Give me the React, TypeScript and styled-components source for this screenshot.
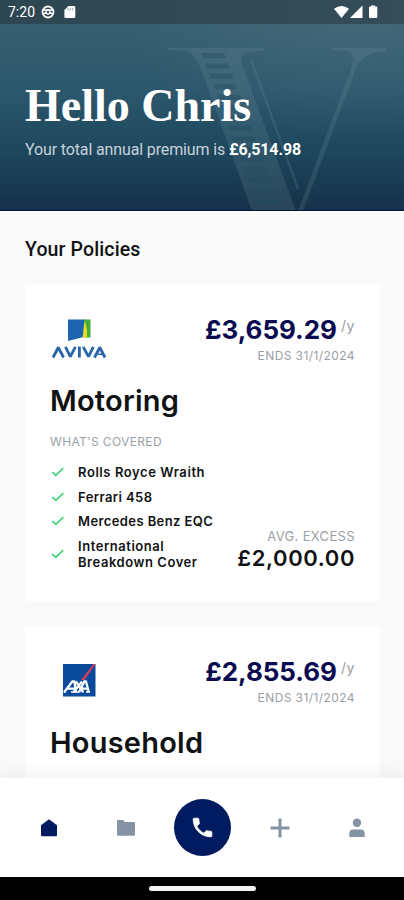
import React from "react";
import styled, { createGlobalStyle } from "styled-components";

const GlobalStyle = createGlobalStyle`
  * { box-sizing: border-box; }
  body { margin: 0; background: #fafafa; }
`;

const Screen = styled.div`
  position: relative;
  display: flex;
  flex-direction: column;
  width: 404px;
  height: 900px;
  overflow: hidden;
  background: #fafafa;
  font-family: Inter, "Work Sans", sans-serif;
  color: #111214;
`;

const Header = styled.header`
  position: relative;
  flex: none;
  height: 211px;
  overflow: hidden;
  border-bottom: 1px solid #06123c;
  background: radial-gradient(ellipse 240px 130px at 360px 10px, rgba(255, 255, 255, 0.065), transparent),
    linear-gradient(180deg, #38606f 0%, #365e70 14%, #2d586d 42%, #1e475d 71%, #15324a 100%);
`;

const Monogram = styled.svg`
  position: absolute;
  left: 160px;
  top: 40px;
  width: 240px;
  height: 171px;
`;

const StatusBar = styled.div`
  position: relative;
  display: flex;
  align-items: center;
  justify-content: space-between;
  height: 24px;
  padding: 0 26px 0 8px;
  background: linear-gradient(90deg, #2d4652, #354d58);
  color: #fff;
`;

const StatusGroup = styled.div<{ $gap: number }>`
  display: flex;
  align-items: center;
  gap: ${(p) => p.$gap}px;
`;

const Clock = styled.span`
  width: 27px;
  font: 400 14px/24px Roboto, sans-serif;
  white-space: nowrap;
`;

const Greeting = styled.h1`
  position: relative;
  margin: 58px 0 0 25px;
  font: 700 46px/48px "Liberation Serif", serif;
  color: #fff;
  white-space: nowrap;
`;

const Summary = styled.p`
  position: relative;
  margin: 9px 0 0 25px;
  font: 400 16px/22px Roboto, sans-serif;
  letter-spacing: -0.13px;
  color: #c6d2da;
  white-space: nowrap;
  strong { color: #fff; font-weight: 700; }
`;

const Content = styled.main`
  flex: 1;
  min-height: 0;
  overflow: hidden;
  padding: 27px 24px 0 25px;
`;

const SectionTitle = styled.h2`
  margin: 0 0 22px;
  font: 500 19.5px/24px Roboto, sans-serif;
  letter-spacing: 0.12px;
`;

const Card = styled.article`
  height: 317px;
  margin-bottom: 25px;
  padding: 32px 25px 0 25px;
  background: #fff;
`;

const CardTop = styled.div`
  display: flex;
  justify-content: space-between;
  height: 64px;
`;

const Brand = styled.div`
  display: flex;
  justify-content: center;
  width: 58px;
  padding-top: 1px;
`;

const PriceBlock = styled.div`
  display: flex;
  flex-direction: column;
  align-items: flex-end;
`;

const PriceRow = styled.div`
  display: flex;
  align-items: flex-start;
  gap: 4px;
  height: 27px;
`;

const Price = styled.span`
  font-size: 26px;
  line-height: 27px;
  font-weight: 700;
  color: #0a0a50;
  letter-spacing: -0.05px;
`;

const PerYear = styled.span`
  font: 400 14px/20px Inter, sans-serif;
  letter-spacing: 0.6px;
  color: #9a9da3;
`;

const Caption = styled.span<{ $size: number; $spacing: number }>`
  font-size: ${(p) => p.$size}px;
  line-height: 18px;
  letter-spacing: ${(p) => p.$spacing}px;
  color: #9a9fa6;
  white-space: nowrap;
`;

const Ends = styled(Caption)`
  margin-top: 4px;
`;

const PolicyName = styled.h3`
  margin: 3px 0 0;
  font-size: 29px;
  line-height: 36px;
  font-weight: 600;
  letter-spacing: 0.22px;
`;

const Covered = styled.div`
  margin-top: 14px;
  height: 18px;
  display: flex;
`;

const CardBottom = styled.div`
  display: flex;
  justify-content: space-between;
  align-items: flex-end;
  margin-top: 9px;
`;

const CoverList = styled.ul`
  display: flex;
  flex-direction: column;
  gap: 8.6px;
  margin: 4px 0 0;
  padding: 0;
  list-style: none;
`;

const CoverItem = styled.li<{ $spacing: number }>`
  display: flex;
  align-items: center;
  gap: 12px;
  font-size: 13px;
  line-height: 16px;
  font-weight: 600;
  letter-spacing: ${(p) => p.$spacing}px;
  white-space: pre;
`;

const Excess = styled.div`
  display: flex;
  flex-direction: column;
  align-items: flex-end;
  margin-bottom: -1.5px;
`;

const ExcessAmount = styled.span`
  font-size: 22px;
  line-height: 26px;
  font-weight: 600;
  letter-spacing: 0.6px;
`;

const Nav = styled.nav`
  position: relative;
  flex: none;
  display: grid;
  grid-template-columns: repeat(5, 1fr);
  place-items: center;
  height: 99px;
  padding: 0 9px 0 11px;
  background: #fff;
  box-shadow: 0 0 20px 4px rgba(20, 30, 50, 0.06);
`;

const NavButton = styled.button<{ $active?: boolean }>`
  display: flex;
  align-items: center;
  justify-content: center;
  width: 20px;
  height: 20px;
  padding: 0;
  border: 0;
  background: none;
  color: ${(p) => (p.$active ? "#001b60" : "#8593a5")};
`;

const CallButton = styled(NavButton)`
  width: 57px;
  height: 57px;
  border-radius: 50%;
  background: #001b60;
  color: #fff;
`;

const GestureBar = styled.div`
  position: relative;
  flex: none;
  display: flex;
  justify-content: center;
  height: 23px;
  padding: 9px 0 0 1px;
  background: #000;
`;

const Handle = styled.div`
  width: 107px;
  height: 5px;
  border-radius: 3px;
  background: #f4f2f4;
`;

const SHADES = Array.from({ length: 15 }, (_, i) => 53 + i * 10.4);

const HeaderMonogram = () => (
  <Monogram viewBox="160 40 240 171">
    <g fill="#7697a6" fillOpacity="0.2">
      <path d="M168 48H264V51L247 52Q240 53 242 64L296 211H252L202 72Q195 53 187 51L168 50Z" />
      <path d="M250 60L252 59L299 188L297 190Z" />
      <path d="M332 48H386V51Q364 52 357 66L303 211H298L351 69Q356 53 348 51L332 50Z" />
    </g>
    <g fill="#214c62" fillOpacity="0.42">
      {SHADES.map((y) => {
        const x = 201 + (y - 53) * 0.37;
        return <path key={y} d={`M${x} ${y}h23l2 5h-23z`} />;
      })}
    </g>
  </Monogram>
);

const AvivaLogo = () => (
  <svg width="58" height="46" viewBox="50 317 58 46">
    <path d="M83.5 319.5H90.5V337.5H83.5Z" fill="#42ad38" />
    <path d="M84.7 320L87 330V337.5H82.5Z" fill="#f0dc24" />
    <path d="M68 319.5H84.5L82.7 337.3L68 341Z" fill="#1c63b0" />
    <g stroke="#2865ad" strokeWidth="2.8" fill="none" strokeLinejoin="bevel">
      <path d="M53 357.5L58.3 347.5L63.6 357.5" />
      <path d="M65.4 346.8L70.3 356.6L75.4 346.8" />
      <path d="M79.4 346.5V357.5" />
      <path d="M83.2 346.8L88.5 356.6L93.4 346.8" />
      <path d="M94.5 357.5L99.8 347.5L105 357.5" />
    </g>
    <path d="M97.5 353.5H103V355H97.5Z" fill="#2865ad" />
  </svg>
);

const AxaLogo = () => (
  <svg width="58" height="46" viewBox="50 659 58 46">
    <path d="M63 664H95.5V696.5H63Z" fill="#094a9b" />
    <path d="M93.5 664H95.5L84.2 680H81.2Z" fill="#ed3857" />
    <g fill="none" stroke="#fff" strokeWidth="2.3" strokeLinejoin="round">
      <path d="M64 692.5L72.3 681.5H74.5L76 692.5M67.5 688.7H75" />
      <path d="M76 681.5L83.2 692.3M82 681.5L73.5 692.3" />
      <path d="M79 692.3L84.3 681.5H86L88.8 692.3M81.5 688.7H88" />
    </g>
    <path d="M71 692H79M86 692H90" stroke="#fff" strokeWidth="1.4" />
  </svg>
);

const Check = () => (
  <svg width="16" height="12" viewBox="0 0 16 12" fill="none">
    <path d="M2.3 6L5.8 9.3L13.3 2.2" stroke="#3bd375" strokeWidth="1.6" />
  </svg>
);

interface Policy {
  name: string;
  price: string;
  logo: React.ReactNode;
  covers: { text: string; spacing: number }[];
  excess?: string;
}

const POLICIES: Policy[] = [
  {
    name: "Motoring",
    price: "£3,659.29",
    logo: <AvivaLogo />,
    covers: [
      { text: "Rolls Royce Wraith", spacing: 0.58 },
      { text: "Ferrari 458", spacing: 0.42 },
      { text: "Mercedes Benz EQC", spacing: 0.4 },
      { text: "International\nBreakdown Cover", spacing: 0.55 },
    ],
    excess: "£2,000.00",
  },
  { name: "Household", price: "£2,855.69", logo: <AxaLogo />, covers: [] },
];

const PolicyCard = ({ policy }: { policy: Policy }) => (
  <Card>
    <CardTop>
      <Brand>{policy.logo}</Brand>
      <PriceBlock>
        <PriceRow>
          <Price>{policy.price}</Price>
          <PerYear>/y</PerYear>
        </PriceRow>
        <Ends $size={12} $spacing={0.42}>ENDS 31/1/2024</Ends>
      </PriceBlock>
    </CardTop>
    <PolicyName>{policy.name}</PolicyName>
    {policy.excess && (
      <>
        <Covered>
          <Caption $size={12} $spacing={0.35}>WHAT'S COVERED</Caption>
        </Covered>
        <CardBottom>
          <CoverList>
            {policy.covers.map((c) => (
              <CoverItem key={c.text} $spacing={c.spacing}>
                <Check />
                {c.text}
              </CoverItem>
            ))}
          </CoverList>
          <Excess>
            <Caption $size={13} $spacing={0.35}>AVG. EXCESS</Caption>
            <ExcessAmount>{policy.excess}</ExcessAmount>
          </Excess>
        </CardBottom>
      </>
    )}
  </Card>
);

const App = () => (
  <Screen>
    <GlobalStyle />
    <Header>
      <HeaderMonogram />
      <StatusBar>
        <StatusGroup $gap={6}>
          <Clock>7:20</Clock>
          <svg width="14" height="14" viewBox="0 0 14 14" fill="none" stroke="#fff">
            <circle cx="7" cy="7" r="5.5" strokeWidth="1.8" />
            <circle cx="7" cy="7" r="2" strokeWidth="1.4" />
            <path d="M2 5H12M2.4 8.7L5 8M11.6 8.7L9 8" strokeWidth="1.5" />
          </svg>
          <svg width="16" height="14" viewBox="0 0 16 14">
            <path d="M7.5 1H13Q14.3 1 14.3 2.2V11.8Q14.3 13 13 13H4.7Q3.4 13 3.4 11.8V5Z" fill="#fff" />
            <path d="M7 3V5.5M9.2 3V5.5M11.4 3V5.5" stroke="#6f808a" strokeWidth="0.7" />
          </svg>
        </StatusGroup>
        <StatusGroup $gap={0}>
          <svg width="44" height="14" viewBox="0 0 44 14" fill="#fff">
            <path d="M0 3.8Q7.5 -2 15 3.8L7.5 13Z" />
            <path d="M28.5 .5V13H16Z" />
            <path d="M37 1.5V.4H41V1.5H42.3Q43.3 1.5 43.3 2.5V12Q43.3 13 42.3 13H36Q35 13 35 12V2.5Q35 1.5 36 1.5Z" />
          </svg>
        </StatusGroup>
      </StatusBar>
      <Greeting>Hello Chris</Greeting>
      <Summary>
        Your total annual premium is <strong>£6,514.98</strong>
      </Summary>
    </Header>
    <Content>
      <SectionTitle>Your Policies</SectionTitle>
      {POLICIES.map((p) => (
        <PolicyCard key={p.name} policy={p} />
      ))}
    </Content>
    <Nav>
      <NavButton $active aria-label="Home">
        <svg width="18" height="18" viewBox="0 0 18 18">
          <path d="M9 .3L17 6.2V16.3Q17 17.3 16 17.3H2Q1 17.3 1 16.3V6.2Z" fill="currentColor" />
        </svg>
      </NavButton>
      <NavButton aria-label="Documents">
        <svg width="20" height="18" viewBox="0 0 20 18">
          <path d="M1 2Q1 1 2 1H7L9 3H18Q19 3 19 4V15.7Q19 16.7 18 16.7H2Q1 16.7 1 15.7Z" fill="currentColor" />
        </svg>
      </NavButton>
      <CallButton aria-label="Call">
        <svg width="25" height="25" viewBox="0 0 24 24">
          <path
            d="M6.6 10.8c1.4 2.8 3.8 5.1 6.6 6.6l2.2-2.2c.3-.3.7-.4 1-.2 1.1.4 2.3.6 3.6.6.6 0 1 .4 1 1V20c0 .6-.4 1-1 1C10.6 21 3 13.4 3 4c0-.6.4-1 1-1h3.5c.6 0 1 .4 1 1 0 1.3.2 2.5.6 3.6.1.3 0 .7-.2 1z"
            fill="currentColor"
            stroke="currentColor"
            strokeWidth="0.7"
            strokeLinejoin="round"
          />
        </svg>
      </CallButton>
      <NavButton aria-label="Add">
        <svg width="20" height="20" viewBox="0 0 20 20">
          <path d="M10 .5V19.5M.5 10H19.5" stroke="currentColor" strokeWidth="3" />
        </svg>
      </NavButton>
      <NavButton aria-label="Profile">
        <svg width="18" height="20" viewBox="0 0 18 20" fill="currentColor">
          <circle cx="9" cy="4.8" r="4.2" />
          <path d="M1.3 19V15.5Q1.3 11.6 5 11.6H13Q16.7 11.6 16.7 15.5V19Z" />
        </svg>
      </NavButton>
    </Nav>
    <GestureBar>
      <Handle />
    </GestureBar>
  </Screen>
);

export default App;
